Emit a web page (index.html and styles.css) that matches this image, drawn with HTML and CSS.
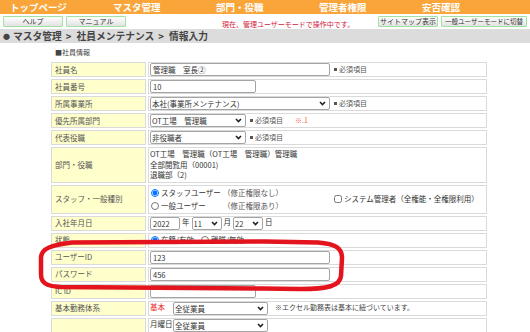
FILE: index.html
```html
<!DOCTYPE html>
<html lang="ja">
<head>
    <meta charset="UTF-8">
    <meta name="viewport" content="width=device-width, initial-scale=1.0">
    <title>社員メンテナンス - 情報入力</title>
    <link rel="stylesheet" href="styles.css">
</head>
<body>
    <div class="topnav">
        <a class="nav-item">トップページ</a>
        <a class="nav-item">マスタ管理</a>
        <a class="nav-item">部門・役職</a>
        <a class="nav-item">管理者権限</a>
        <a class="nav-item">安否確認</a>
    </div>

    <div class="toolbar">
        <button class="btn">ヘルプ</button>
        <button class="btn">マニュアル</button>
        <span class="mode">現在、管理ユーザーモードで操作中です。</span>
        <button class="btn push-right">サイトマップ表示</button>
        <button class="btn wide">一般ユーザーモードに切替</button>
    </div>

    <div class="crumb"><span class="dot">●</span>マスタ管理<span class="sep">&gt;</span>社員メンテナンス<span class="sep">&gt;</span>情報入力</div>

    <p class="section">■社員情報</p>

    <table class="form">
        <tr>
            <th>社員名</th>
            <td><input class="field w180" value="管理職　室長②"><span class="req">必須項目</span></td>
        </tr>
        <tr>
            <th>社員番号</th>
            <td><input class="field w106" value="10"></td>
        </tr>
        <tr>
            <th>所属事業所</th>
            <td><span class="pick w180"><select><option>本社(事業所メンテナンス)</option></select><svg class="chev" viewBox="0 0 7 5"><polyline points="1,1 3.5,3.5 6,1"/></svg></span><span class="req">必須項目</span></td>
        </tr>
        <tr>
            <th>優先所属部門</th>
            <td><span class="pick w96"><select><option>OT工場　管理職</option></select><svg class="chev" viewBox="0 0 7 5"><polyline points="1,1 3.5,3.5 6,1"/></svg></span><span class="req">必須項目</span><span class="note-red">※.1</span></td>
        </tr>
        <tr>
            <th>代表役職</th>
            <td><span class="pick w96"><select><option>非役職者</option></select><svg class="chev" viewBox="0 0 7 5"><polyline points="1,1 3.5,3.5 6,1"/></svg></span><span class="req">必須項目</span></td>
        </tr>
        <tr>
            <th>部門・役職</th>
            <td class="lines">OT工場　管理職（OT工場　管理職）管理職<br>全部閲覧用（00001)<br>退職部（2)</td>
        </tr>
        <tr>
            <th>スタッフ・一般種別</th>
            <td class="kinds">
                <div class="kind-row">
                    <div class="kind-grid">
                        <label class="opt"><input type="radio" name="kind" checked>スタッフユーザー</label>
                        <span class="sub">（修正権限なし）</span>
                        <label class="opt"><input type="radio" name="kind">一般ユーザー</label>
                        <span class="sub">（修正権限あり）</span>
                    </div>
                    <label class="opt"><input type="checkbox">システム管理者（全権能・全権限利用）</label>
                </div>
            </td>
        </tr>
        <tr>
            <th>入社年月日</th>
            <td><input class="field w30" value="2022"><span class="unit">年</span><span class="pick w30"><select><option>11</option></select><svg class="chev" viewBox="0 0 7 5"><polyline points="1,1 3.5,3.5 6,1"/></svg></span><span class="unit">月</span><span class="pick w30"><select><option>22</option></select><svg class="chev" viewBox="0 0 7 5"><polyline points="1,1 3.5,3.5 6,1"/></svg></span><span class="unit">日</span></td>
        </tr>
        <tr>
            <th>状態</th>
            <td><label class="opt gap"><input type="radio" name="state" checked>在籍/有効</label><label class="opt"><input type="radio" name="state">離職/無効</label></td>
        </tr>
        <tr>
            <th>ユーザーID</th>
            <td><input class="field w180" value="123"></td>
        </tr>
        <tr>
            <th>パスワード</th>
            <td><input class="field w180" value="456"></td>
        </tr>
        <tr>
            <th>IC ID</th>
            <td><input class="field w106" value=""></td>
        </tr>
        <tr>
            <th>基本勤務体系</th>
            <td><span class="day red">基本</span><span class="pick w95"><select><option>全従業員</option></select><svg class="chev" viewBox="0 0 7 5"><polyline points="1,1 3.5,3.5 6,1"/></svg></span><span class="note">※エクセル勤務表は基本に紐づいています。</span></td>
        </tr>
        <tr>
            <th></th>
            <td><span class="day">月曜日</span><span class="pick w95"><select><option>全従業員</option></select><svg class="chev" viewBox="0 0 7 5"><polyline points="1,1 3.5,3.5 6,1"/></svg></span></td>
        </tr>
    </table>

    <!-- red marker drawn over the login fields -->
    <svg class="marker" width="530" height="332" viewBox="0 0 530 332">
        <path d="M72 242.5 C52 245 41 248 41 258 L41 274 C41 283 46 286 60 287 L262 288.5 L300 289 C328 289 340 286 341 276 L342 258 C342 248 336 244 318 242.5 L265 241.5 Z" />
    </svg>
</body>
</html>
```

FILE: styles.css
```css
body { margin: 0; font-family: "Noto Sans CJK JP", "Noto Sans", sans-serif; font-size: 7.5px; color: #333; background-color: #fff; }

/* orange menu bar */
.topnav { display: flex; height: 14px; background-color: #f9a53a; }
.nav-item { width: 103px; padding-left: 10px; box-sizing: border-box; color: #fff; font-size: 9.5px; font-weight: bold; line-height: 14px; }

/* buttons + mode message */
.toolbar { display: flex; height: 15px; padding: 2px 3px 0; box-sizing: border-box; }
.btn {
    width: 60px;
    height: 11px;
    margin: 0 3px 0 0;
    padding: 0;
    border: 1px solid #9fe39f;
    border-radius: 1px;
    background: linear-gradient(#fefefe, #e2e2e2);
    color: #333;
    font-family: inherit;
    font-size: 7px;
    line-height: 9px;
    white-space: nowrap;
}
.btn.wide { width: 86px; margin-right: 0; font-size: 6.5px; }
.push-right { margin-left: auto; }
.mode { margin-left: 93px; padding-top: 4px; color: #d4163c; font-size: 7px; line-height: 9px; }

.crumb { height: 14px; padding-left: 3px; background-color: #dcdcdc; color: #444; font-size: 9.75px; font-weight: bold; line-height: 14px; white-space: nowrap; }
.crumb .dot { margin-right: 3px; font-size: 7px; vertical-align: 1px; }
.crumb .sep { margin: 0 5px 0 4px; }

.section { margin: 0; padding: 5px 0 0 55px; font-size: 7px; line-height: 8px; color: #444; }

/* form table */
.form { margin: 4px 0 0 49px; width: 440px; border-collapse: separate; border-spacing: 2px; }
.form th {
    width: 87px;
    height: 13px;
    padding: 0 3px;
    border: 1px solid #dadada;
    background-color: #ffffcc;
    color: #555;
    font-weight: normal;
    text-align: left;
    vertical-align: middle;
    line-height: 10px;
}
.form td { height: 13px; padding: 0 1px; border: 1px solid #dadada; vertical-align: middle; line-height: 10px; white-space: nowrap; }
.form td.lines { padding: 1px 1px; line-height: 10.5px; }
.form td.kinds { padding: 2px 1px; }

.field {
    height: 13px;
    margin: 0;
    padding: 0 2px;
    box-sizing: border-box;
    border: 1px solid #a4a4a4;
    border-radius: 2px;
    background-color: #fff;
    color: #333;
    font-family: inherit;
    font-size: 7.5px;
    vertical-align: middle;
}
.pick { display: inline-flex; align-items: center; height: 13px; box-sizing: border-box; border: 1px solid #a4a4a4; border-radius: 2px; background-color: #fff; vertical-align: middle; }
.pick select { flex: 1; min-width: 0; height: 100%; margin: 0; padding: 0 1px; border: 0; background: transparent; appearance: none; color: #333; font-family: inherit; font-size: 7.5px; outline: none; }
.chev { flex: none; width: 7px; height: 5px; margin-right: 3px; }
.chev polyline { fill: none; stroke: #222; stroke-width: 1.6; }

.w180 { width: 180px; }
.w106 { width: 106px; }
.w96 { width: 96px; }
.w95 { width: 95px; }
.w30 { width: 30px; }

.req { margin-left: 4px; color: #555; font-size: 7px; }
.req::before { content: ""; display: inline-block; width: 3px; height: 3px; margin: 0 2px 1px 0; background-color: #555; vertical-align: middle; }
.note-red { margin-left: 12px; color: #f36b5e; font-size: 7px; }
.note { margin-left: 7px; color: #444; font-size: 7px; }
.unit { margin: 0 2px; }
.day { display: inline-block; width: 23px; }
.red { color: #ee2b2b; }

.kind-row { display: flex; }
.kind-grid { display: grid; grid-template-columns: 73px 110px; row-gap: 3px; }
.sub { color: #555; }
.opt { display: inline-flex; align-items: center; }
.opt.gap { margin-right: 6px; }
.opt input { width: 8px; height: 8px; margin: 0 2px 0 1px; }

.marker { position: absolute; left: 0; top: 0; pointer-events: none; }
.marker path { fill: none; stroke: #e3141d; stroke-width: 4.5; stroke-linejoin: round; }
```
